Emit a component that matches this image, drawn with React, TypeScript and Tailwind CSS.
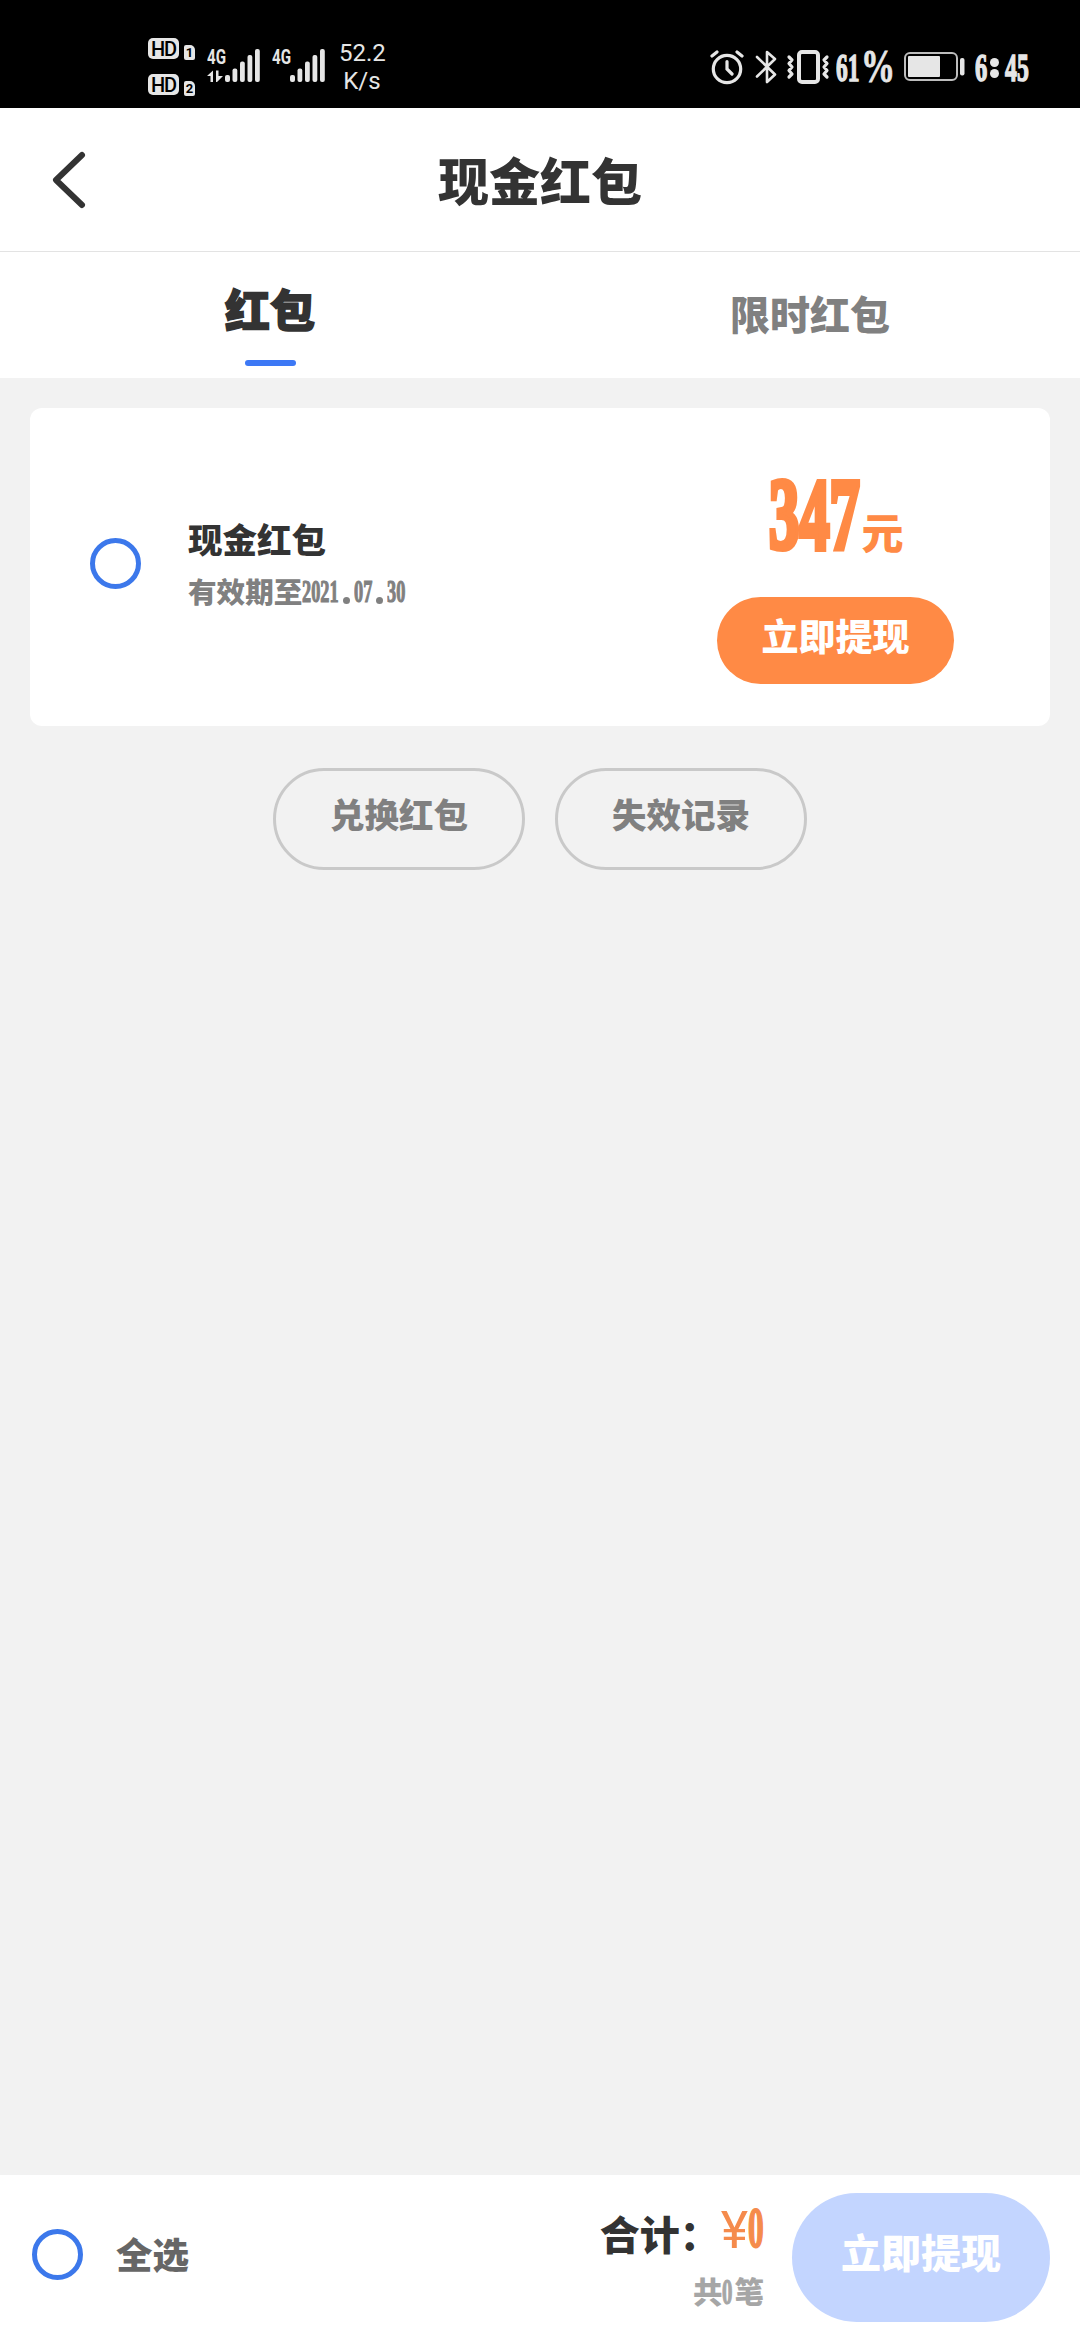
import { ReactNode } from "react";
import clsx from "clsx";

// Condensed serif figures: the box keeps the narrow width, the glyphs are squeezed into it
function Figures({ children, className, squeeze }: { children: ReactNode; className: string; squeeze: string }) {
  return (
    <span className={clsx("inline-block shrink-0 whitespace-nowrap font-bold leading-none font-['Liberation_Serif',serif]", className)}>
      <span className={clsx("inline-block origin-left", squeeze)}>{children}</span>
    </span>
  );
}

function HdBadge({ sim }: { sim: string }) {
  return (
    <div className="flex h-[22px] items-end gap-[5px]">
      <span className="flex h-[21px] w-[31px] mb-px items-center justify-center rounded-[5px] bg-[#e6e6e6] text-[20px] leading-none font-medium tracking-[-1px] text-black">
        HD
      </span>
      <span className="flex h-[15px] w-[11px] items-center justify-center rounded-[2px] rounded-tr-[5px] bg-[#e6e6e6] text-[13px] leading-none font-bold text-black">
        {sim}
      </span>
    </div>
  );
}

function Signal({ arrows = false }: { arrows?: boolean }) {
  return (
    <svg width="54" height="46" viewBox="0 -10 54 46" fill="#e6e6e6">
      <text x="0" y="16" fontSize="20" fontWeight="700" textLength="19" lengthAdjust="spacingAndGlyphs">
        4G
      </text>
      {arrows && (
        <>
          <path d="M0 28L6 22.500V34H3.500V28Z" />
          <path d="M9 22.500H11.500V28H16L10 34H9Z" />
        </>
      )}
      <rect x="18" y="27" width="5" height="7" rx="2" />
      <rect x="25.500" y="20.500" width="4.800" height="13.500" rx="2" />
      <rect x="33" y="13.500" width="4.800" height="20.500" rx="2" />
      <rect x="40.500" y="7" width="4.800" height="27" rx="2" />
      <rect x="48" y="1" width="4.800" height="33" rx="2" />
    </svg>
  );
}

function AlarmIcon() {
  return (
    <svg width="34" height="36" viewBox="0 0 34 36" fill="none" stroke="#e6e6e6" strokeWidth="3.200" strokeLinecap="round">
      <circle cx="17" cy="20" r="13.700" />
      <path d="M2 7L7 3M32 7L27 3M17 12.500V20L22 25" />
    </svg>
  );
}

function BluetoothIcon() {
  return (
    <svg width="22" height="36" viewBox="0 0 22 36" fill="none" stroke="#e6e6e6" strokeWidth="2.600" strokeLinecap="round" strokeLinejoin="round">
      <path d="M2 8L20 25.500L12 33V3L20 10L2 27.500" />
    </svg>
  );
}

function VibrateIcon() {
  return (
    <svg width="44" height="36" viewBox="0 0 44 36" fill="none" stroke="#e6e6e6" strokeLinecap="round" strokeLinejoin="round">
      <rect x="13" y="3" width="19" height="30" rx="3" strokeWidth="4" />
      <path d="M3 8L6 11L3 14.500L6 18L3 21.500L6 25L3 28M41 8L38 11L41 14.500L38 18L41 21.500L38 25L41 28" strokeWidth="3.200" />
    </svg>
  );
}

function BatteryIcon() {
  return (
    <svg width="62" height="30" viewBox="0 0 62 30" fill="#e6e6e6">
      <rect x="1" y="1" width="52" height="27" rx="5" fill="none" stroke="#bdbdbd" strokeWidth="2" />
      <rect x="4" y="4" width="32" height="21" rx="1" />
      <rect x="56" y="6" width="4.500" height="17.500" rx="2" />
    </svg>
  );
}

function StatusBar() {
  return (
    <div className="flex h-[108px] shrink-0 items-start bg-black pl-[148px] text-[#e6e6e6] font-['Roboto',sans-serif]">
      <div className="mt-[38px] flex w-[59px] flex-col gap-[14px]">
        <HdBadge sim="1" />
        <HdBadge sim="2" />
      </div>
      <div className="mt-[38px] flex gap-[11px]">
        <Signal arrows />
        <Signal />
      </div>
      <div className="mt-[39px] ml-[13px] w-[46px] text-center text-[24px] leading-[28px] font-normal whitespace-nowrap">
        52.2
        <br />
        K/s
      </div>
      <div className="mt-[49px] ml-[325px] flex h-[36px] items-center">
        <AlarmIcon />
        <div className="ml-[11px]"><BluetoothIcon /></div>
        <div className="ml-[9px]"><VibrateIcon /></div>
        <Figures className="ml-[6px] w-[25px] text-[41px] [-webkit-text-stroke:1.5px_#e6e6e6]" squeeze="scale-x-[0.57]">61</Figures>
        <Figures className="w-[43px] text-[46px] [-webkit-text-stroke:0.8px_#e6e6e6]" squeeze="scale-x-[0.74]">%</Figures>
        <BatteryIcon />
        <Figures className="ml-[9px] w-[15px] text-[41px] [-webkit-text-stroke:1.5px_#e6e6e6]" squeeze="scale-x-[0.6]">6</Figures>
        <span className="mt-[2px] flex w-[15px] flex-col gap-[2px]">
          <i className="size-[9px] rounded-full bg-[#e6e6e6]" />
          <i className="size-[9px] rounded-full bg-[#e6e6e6]" />
        </span>
        <Figures className="text-[41px] [-webkit-text-stroke:1.5px_#e6e6e6]" squeeze="scale-x-[0.58]">45</Figures>
      </div>
    </div>
  );
}

function Radio() {
  return <span className="mb-[7px] size-[51px] shrink-0 rounded-full border-[5px] border-[#3c78eb]" />;
}

export default function App() {
  return (
    <div className="flex h-[2340px] w-[1080px] flex-col overflow-hidden bg-[#f2f2f2] font-black text-[#333] font-['Liberation_Serif','Noto_Sans_CJK_SC',sans-serif]">
      <StatusBar />

      <header className="grid h-[144px] shrink-0 grid-cols-[1fr_auto_1fr] items-center border-b border-[#e3e3e3] bg-white">
        <svg className="mt-px ml-[51px]" width="36" height="60" viewBox="0 0 36 60" fill="none" stroke="#333" strokeWidth="6" strokeLinecap="round" strokeLinejoin="round">
          <path d="M31 5L5 30L31 55" />
        </svg>
        <h1 className="mt-[10px] text-[51px] leading-none">现金红包</h1>
      </header>

      <nav className="grid h-[126px] shrink-0 grid-cols-2 bg-white">
        <div className="flex flex-col items-center pt-[36px]">
          <span className="text-[45px] leading-[50px] [-webkit-text-stroke:1.5px_#333]">红包</span>
          <span className="mt-[22px] h-[6px] w-[51px] rounded-full bg-[#3c78f5]" />
        </div>
        <div className="flex justify-center pt-[40px] text-[40px] leading-[50px] text-[#808080]">限时红包</div>
      </nav>

      <main className="flex flex-1 flex-col px-[30px] pt-[30px]">
        <section className="flex h-[318px] items-center rounded-[12px] bg-white pl-[60px]">
          <Radio />
          <div className="ml-[47px] flex w-[529px] flex-col">
            <h2 className="text-[34.5px] leading-[46px]">现金红包</h2>
            <div className="mt-[7px] flex items-center text-[28.6px] leading-[46px] text-[#808080]">
              <span>有效期至</span>
              <Figures className="mb-[5px] w-[37px] text-[31px] [-webkit-text-stroke:1.2px_#808080]" squeeze="scale-x-[0.59]">2021</Figures>
              <i className="mt-[13px] mx-[4px] size-[7px] rounded-full bg-[#808080]" />
              <Figures className="mb-[5px] w-[18px] text-[31px] [-webkit-text-stroke:1.2px_#808080]" squeeze="scale-x-[0.59]">07</Figures>
              <i className="mt-[13px] mx-[4px] size-[7px] rounded-full bg-[#808080]" />
              <Figures className="mb-[5px] text-[31px] [-webkit-text-stroke:1.2px_#808080]" squeeze="scale-x-[0.59]">30</Figures>
            </div>
          </div>
          <div className="flex w-[237px] flex-col items-center">
            <div className="flex h-[147px] w-[134px] items-baseline pt-[15px] text-[#ff8a45]">
              <Figures className="w-[93px] text-[101px] [-webkit-text-stroke:6px_#ff8a45]" squeeze="scale-x-[0.6]">
                347
              </Figures>
              <span className="text-[42px] leading-none">元</span>
            </div>
            <button className="h-[87px] w-[237px] rounded-full bg-[#ff8a45] pb-[4px] text-[37px] leading-none text-white">
              立即提现
            </button>
          </div>
        </section>

        <div className="mt-[42px] flex justify-center gap-[30px] text-[34.5px] leading-none text-[#808080]">
          <button className="h-[102px] w-[252px] rounded-full border-3 border-[#c9c9c9] pb-[6px]">兑换红包</button>
          <button className="h-[102px] w-[252px] rounded-full border-3 border-[#c9c9c9] pb-[6px]">失效记录</button>
        </div>
      </main>

      <footer className="flex h-[165px] shrink-0 items-center bg-white pr-[30px] pl-[32px]">
        <Radio />
        <span className="ml-[33px] text-[36.5px] leading-none text-[#666]">全选</span>
        <div className="mr-[28px] ml-auto flex flex-col items-end pt-[7px]">
          <div className="flex h-[60px] items-center">
            <span className="text-[40px] leading-none">合计：</span>
            <span className="mb-[13px] ml-px text-[52px] leading-none font-normal text-[#f58b4c] font-['Roboto',sans-serif]">¥</span>
            <Figures className="mb-[18px] w-[16px] text-[56px] [-webkit-text-stroke:2px_#f58b4c] text-[#f58b4c]" squeeze="scale-x-[0.56]">0</Figures>
          </div>
          <div className="mt-[4px] flex items-center text-[29.500px] leading-[44px] text-[#a6a6a6]">
            <span>共</span>
            <Figures className="mb-[3px] w-[12px] text-[36px] [-webkit-text-stroke:1.2px_#a6a6a6]" squeeze="scale-x-[0.58]">0</Figures>
            <span>笔</span>
          </div>
        </div>
        <button className="h-[129px] w-[258px] rounded-full bg-[#c3d5ff] pb-[5px] text-[40px] leading-none text-white">
          立即提现
        </button>
      </footer>
    </div>
  );
}
